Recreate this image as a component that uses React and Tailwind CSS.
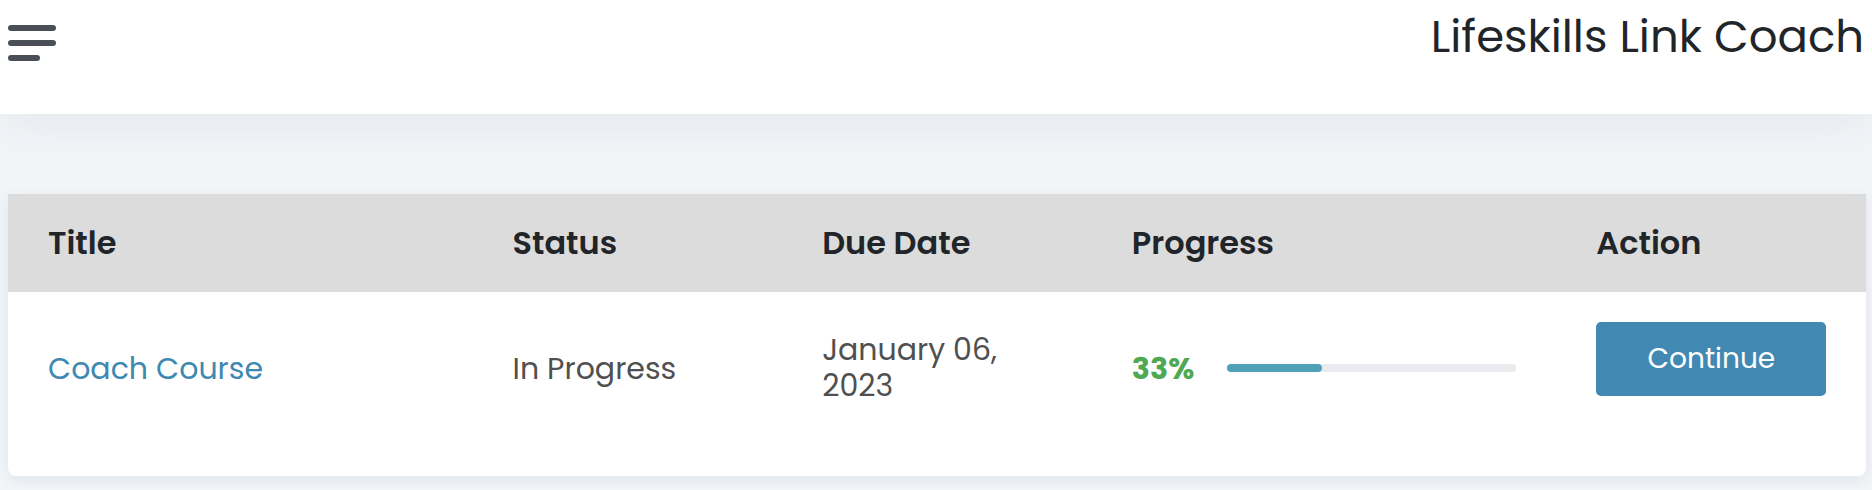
import React from "react";

const font = { fontFamily: '"Poppins", "Open Sans", "Noto Sans", sans-serif' };

function Hamburger() {
  return (
    <div className="flex flex-col gap-[9px] mt-[25px]">
      <span className="block h-[6px] w-[48px] rounded-full bg-[#4a4f57]" />
      <span className="block h-[6px] w-[48px] rounded-full bg-[#4a4f57]" />
      <span className="block h-[6px] w-[32px] rounded-full bg-[#4a4f57]" />
    </div>
  );
}

export default function App() {
  const pct = 33;
  return (
    <div className="min-h-[490px] bg-[#f2f5f8] overflow-hidden" style={font}>
      <header className="relative z-10 flex h-[114px] items-start justify-between bg-white pl-2 pr-[8px] shadow-[0_8px_50px_rgba(30,50,80,0.07)]">
        <Hamburger />
        <h1 className="mt-[7px] text-[45px] font-normal leading-[60px] text-[#212529]">
          Lifeskills Link Coach
        </h1>
      </header>

      <main className="ml-2 mr-[6px] mt-20">
        <div className="overflow-hidden rounded-b-lg bg-white pb-8 shadow-[0_4px_14px_rgba(30,50,80,0.08)]">
          <div className="grid h-[98px] grid-cols-12 items-center bg-[#dcdcdc] text-[32px] font-semibold text-[#212529]">
            <div className="col-span-3 px-10">Title</div>
            <div className="col-span-2 px-10">Status</div>
            <div className="col-span-2 px-10">Due Date</div>
            <div className="col-span-3 px-10">Progress</div>
            <div className="col-span-2 px-10">Action</div>
          </div>
          <div className="grid h-[152px] grid-cols-12 items-center text-[30px] text-[#505050]">
            <div className="col-span-3 px-10">
              <a className="text-[#3e88b1]" href="#">Coach Course</a>
            </div>
            <div className="col-span-2 px-10">In Progress</div>
            <div className="col-span-2 px-10 leading-[36px]">January 06, 2023</div>
            <div className="col-span-3 flex items-center px-10">
              <span className="w-[62px] text-[30px] font-bold text-[#4fa853]">{pct}%</span>
              <div className="ml-[33px] h-2 flex-1 rounded-full bg-[#e9ebef]">
                <div className="h-2 rounded-full bg-[#4fa1b7]" style={{ width: `${pct}%` }} />
              </div>
            </div>
            <div className="col-span-2 px-10 -mt-[18px]">
              <button className="flex h-[74px] w-[230px] items-center justify-center rounded-[5px] bg-[#4189b2] text-[28px] text-white">
                Continue
              </button>
            </div>
          </div>
        </div>
      </main>
    </div>
  );
}
